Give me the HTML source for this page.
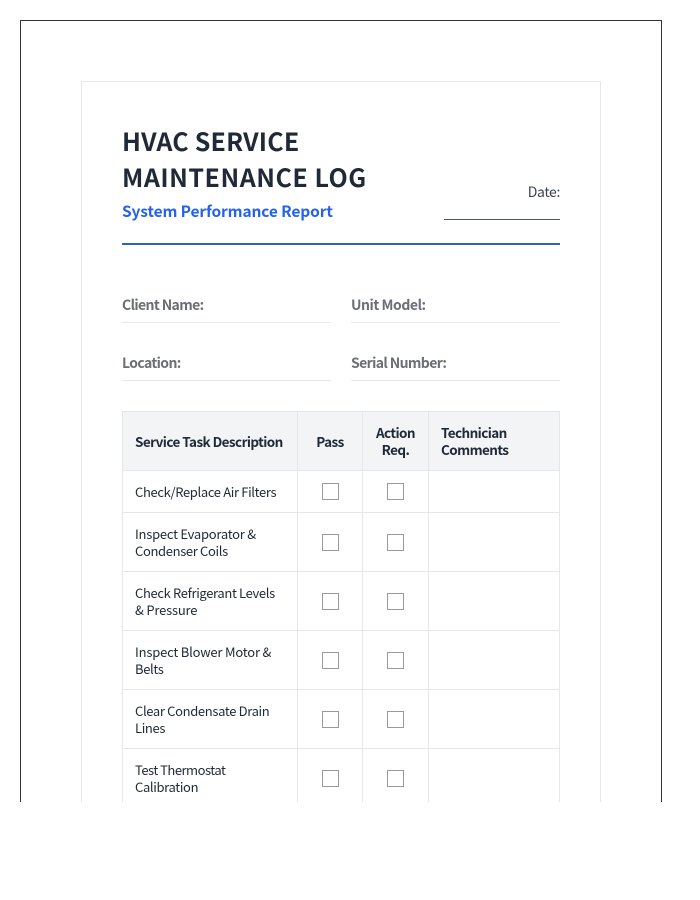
<!DOCTYPE html>
<html><head><meta charset="utf-8">
<style>
html,body{margin:0;padding:0;background:#fff}
body{width:700px;height:900px;position:relative;overflow:hidden;font-family:"Noto Sans CJK JP","Liberation Sans",sans-serif;color:#1f2937}
#clip{position:absolute;left:0;top:0;width:700px;height:802px;overflow:hidden}
.a{position:absolute}
.t{position:absolute;white-space:nowrap;line-height:17px}
.h{font-size:25px;font-weight:700;color:#1f2937;line-height:36px;letter-spacing:.52px}
.l{font-size:14px;font-weight:700;color:#6a6e75;letter-spacing:-.62px}
.th{font-size:13.5px;font-weight:700;color:#1f2937;letter-spacing:-.58px}
.td{font-size:13px;color:#1f2937;letter-spacing:-.35px}
.c{text-align:center}
.hl{position:absolute;height:1px;background:#e5e7eb}
.vl{position:absolute;width:1px;background:#e5e7eb}
.cb{position:absolute;width:15px;height:15px;border:1px solid #9a9a9a;background:#fff}
</style></head><body>
<div id="clip">
<div class="a" style="left:20px;top:20px;width:640px;height:900px;border:1px solid #333"></div>
<div class="a" style="left:81px;top:81px;width:518px;height:900px;border:1px solid #e5e7eb"></div>

<div class="t h" style="left:122px;top:123px;letter-spacing:.2px">HVAC SERVICE</div>
<div class="t h" style="left:122px;top:159px">MAINTENANCE LOG</div>
<div class="t" style="left:122px;top:201px;font-size:15.5px;font-weight:700;color:#2563eb;line-height:20px;letter-spacing:-.13px">System Performance Report</div>
<div class="t" style="right:140px;top:184px;font-size:14px;color:#374151;letter-spacing:-.35px">Date:</div>
<div class="a" style="left:444px;top:219px;width:116px;height:1px;background:#4b5563"></div>
<div class="a" style="left:122px;top:243px;width:438px;height:2px;background:#2b62c8"></div>

<div class="t l" style="left:122px;top:297px">Client Name:</div>
<div class="t l" style="left:351px;top:297px;letter-spacing:-.45px">Unit Model:</div>
<div class="hl" style="left:122px;top:322px;width:209px"></div>
<div class="hl" style="left:351px;top:322px;width:209px"></div>
<div class="t l" style="left:122px;top:355px">Location:</div>
<div class="t l" style="left:351px;top:355px">Serial Number:</div>
<div class="hl" style="left:122px;top:380px;width:209px"></div>
<div class="hl" style="left:351px;top:380px;width:209px"></div>

<div class="a" style="left:122px;top:411px;width:438px;height:60px;background:#f3f4f6"></div>
<div class="hl" style="left:122px;top:411px;width:438px"></div>
<div class="hl" style="left:122px;top:470px;width:438px"></div>
<div class="hl" style="left:122px;top:512px;width:438px"></div>
<div class="hl" style="left:122px;top:571px;width:438px"></div>
<div class="hl" style="left:122px;top:630px;width:438px"></div>
<div class="hl" style="left:122px;top:689px;width:438px"></div>
<div class="hl" style="left:122px;top:748px;width:438px"></div>
<div class="vl" style="left:122px;top:411px;height:400px"></div>
<div class="vl" style="left:297px;top:411px;height:400px"></div>
<div class="vl" style="left:362px;top:411px;height:400px"></div>
<div class="vl" style="left:428px;top:411px;height:400px"></div>
<div class="vl" style="left:559px;top:411px;height:400px"></div>

<div class="t th" style="left:135px;top:433px">Service Task Description</div>
<div class="t th c" style="left:298px;width:64px;top:433px">Pass</div>
<div class="t th c" style="left:363px;width:65px;top:424px">Action<br>Req.</div>
<div class="t th" style="left:441px;top:424px">Technician<br>Comments</div>

<div class="t td" style="left:135px;top:483px">Check/Replace Air Filters</div>
<div class="t td" style="left:135px;top:525px"><span style="letter-spacing:-.25px">Inspect Evaporator &amp;</span><br>Condenser Coils</div>
<div class="t td" style="left:135px;top:584px">Check Refrigerant Levels<br><span style="letter-spacing:-.2px">&amp; Pressure</span></div>
<div class="t td" style="left:135px;top:643px"><span style="letter-spacing:-.2px">Inspect Blower Motor &amp;</span><br>Belts</div>
<div class="t td" style="left:135px;top:702px">Clear Condensate Drain<br>Lines</div>
<div class="t td" style="left:135px;top:761px"><span style="letter-spacing:-.5px">Test Thermostat</span><br>Calibration</div>

<div class="cb" style="left:322px;top:483px"></div><div class="cb" style="left:387px;top:483px"></div>
<div class="cb" style="left:322px;top:534px"></div><div class="cb" style="left:387px;top:534px"></div>
<div class="cb" style="left:322px;top:593px"></div><div class="cb" style="left:387px;top:593px"></div>
<div class="cb" style="left:322px;top:652px"></div><div class="cb" style="left:387px;top:652px"></div>
<div class="cb" style="left:322px;top:711px"></div><div class="cb" style="left:387px;top:711px"></div>
<div class="cb" style="left:322px;top:770px"></div><div class="cb" style="left:387px;top:770px"></div>
</div>
</body></html>
